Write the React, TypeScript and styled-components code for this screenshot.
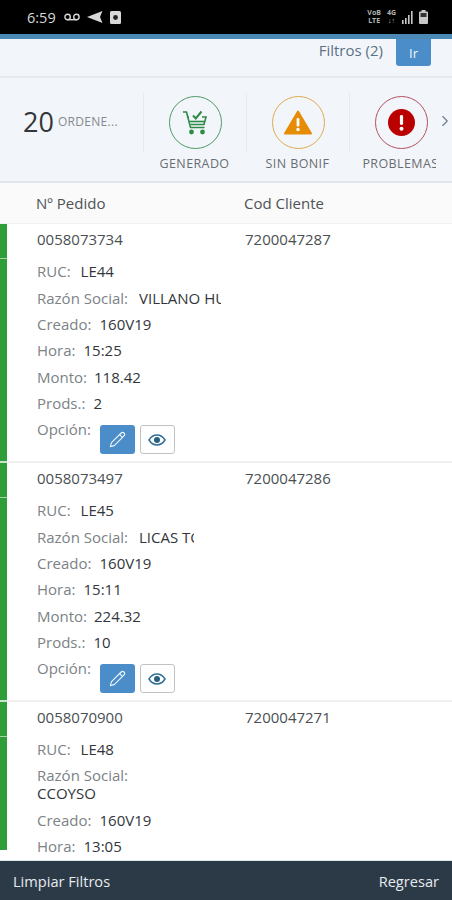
import React from "react";
import styled, { createGlobalStyle } from "styled-components";
import { Pencil, ChevronRight } from "lucide-react";

const GlobalStyle = createGlobalStyle`
  html, body {
    margin: 0;
    padding: 0;
    background: #ffffff;
    font-family: "Open Sans", "Liberation Sans", sans-serif;
  }
`;

const Page = styled.div`
  width: 452px;
  height: 900px;
  display: flex;
  flex-flow: column;
  overflow: hidden;
`;

const StatusBar = styled.div`
  height: 34px;
  flex: none;
  background: #000000;
  display: flex;
  align-items: center;
  justify-content: space-between;
  padding: 0 24px 0 27px;
  color: #d8d8d8;
`;

const StatusLeft = styled.div`
  display: flex;
  align-items: center;
  gap: 7px;
`;

const Clock = styled.span`
  font-size: 14.5px;
  margin-right: 1px;
`;

const StatusRight = styled.div`
  display: flex;
  align-items: center;
  gap: 6px;
`;

const NetworkText = styled.span`
  font-size: 7px;
  line-height: 8px;
  font-weight: 700;
  color: #b4b4b4;
  text-align: center;
`;

const Toolbar = styled.div`
  height: 44px;
  flex: none;
  box-sizing: border-box;
  border-top: 5px solid #4c88b5;
  border-bottom: 2px solid #e6eaef;
  background: #f2f6fb;
  display: flex;
  align-items: flex-start;
  justify-content: flex-end;
  gap: 13px;
  padding-right: 21px;
`;

const FilterLabel = styled.span`
  font-size: 15px;
  line-height: 22px;
  color: #5d7184;
`;

const GoButton = styled.button`
  width: 35px;
  height: 27px;
  border: none;
  border-radius: 0 0 3px 3px;
  background: #4a8dc9;
  color: #f4f8fb;
  font-family: inherit;
  font-size: 13px;
  padding: 0;
`;

const TabBar = styled.div`
  height: 105px;
  flex: none;
  box-sizing: border-box;
  border-bottom: 2px solid #dfe5ec;
  background: #f2f6fb;
  display: flex;
`;

const TabStrip = styled.div`
  width: 436px;
  flex: none;
  display: flex;
  overflow: hidden;
  padding-left: 19px;
  box-sizing: border-box;
`;

const CountTab = styled.div`
  width: 117px;
  height: 105px;
  flex: none;
  box-sizing: border-box;
  border-bottom: 2px solid #1c5c82;
  display: flex;
  align-items: center;
  padding: 0 0 17px 4px;
  margin-right: 7px;
`;

const CountNumber = styled.span`
  font-size: 27px;
  color: #32363a;
  margin-right: 4px;
`;

const CountLabel = styled.span`
  font-size: 12px;
  color: #85898c;
  letter-spacing: 0.3px;
`;

const IconTab = styled.div`
  width: 103px;
  flex: none;
  display: flex;
  flex-flow: column;
  padding-top: 15px;
`;

const IconCell = styled.div`
  height: 59px;
  box-sizing: border-box;
  border-left: 1px solid #e6eaef;
  display: flex;
  align-items: center;
  justify-content: center;
`;

const IconCircle = styled.div<{ $color: string }>`
  width: 53px;
  height: 53px;
  box-sizing: border-box;
  border-radius: 50%;
  border: 1.5px solid ${(p) => p.$color};
  display: flex;
  align-items: center;
  justify-content: center;
`;

const TabLabel = styled.div`
  font-size: 12.5px;
  line-height: 16px;
  margin-top: 4px;
  text-align: center;
  white-space: nowrap;
  color: #6a6d70;
  letter-spacing: 0.4px;
`;

const ChevronBox = styled.div`
  flex: 1;
  display: flex;
  justify-content: center;
  padding-top: 34px;
  color: #6a7b8c;
`;

const HeaderRow = styled.div`
  height: 41px;
  flex: none;
  box-sizing: border-box;
  background: #fafafa;
  border-bottom: 1px solid #f0f0f0;
  display: grid;
  grid-template-columns: 208px 1fr;
  align-items: center;
  padding-left: 36px;
  font-size: 15px;
  color: #4e5356;
`;

const List = styled.div`
  flex: 1;
  min-height: 0;
  overflow: hidden;
`;

const Item = styled.div<{ $last?: boolean }>`
  height: ${(p) => (p.$last ? "148px" : "239px")};
  display: flex;
  flex-flow: column;
`;

const TopRow = styled.div`
  height: 34px;
  flex: none;
  box-sizing: border-box;
  border-left: 7px solid #2f9e3a;
  display: grid;
  grid-template-columns: 208px 1fr;
  align-items: center;
  padding: 0 0 4px 30px;
  font-size: 15px;
  color: #4a4f52;
`;

// faint line that only shows where it crosses the green status bar
const BarGap = styled.div`
  height: 1px;
  flex: none;
  background: linear-gradient(to right, #a5d6a9 7px, #ffffff 7px);
`;

const ItemEnd = styled.div`
  height: 2px;
  flex: none;
  background: linear-gradient(to right, #c9e4cb 7px, #f0f0f0 7px);
`;

const Details = styled.div`
  flex: 1;
  min-height: 0;
  box-sizing: border-box;
  border-left: 7px solid #2f9e3a;
  padding-left: 30px;
  display: flex;
  flex-flow: column;
`;

const Line = styled.div`
  height: 26.4px;
  flex: none;
  box-sizing: border-box;
  padding-bottom: 2px;
  display: flex;
  align-items: center;
  font-size: 15px;
  color: #32363a;
  white-space: nowrap;
`;

const WrappedLine = styled.div`
  flex: none;
  font-size: 15px;
  line-height: 18px;
  color: #32363a;
  padding: 3px 0 5px;
`;

const Label = styled.span<{ $gap?: number }>`
  color: #7c8286;
  margin-right: ${(p) => p.$gap ?? 8}px;
`;

const ClippedValue = styled.span<{ $width: number }>`
  display: inline-block;
  width: ${(p) => p.$width}px;
  overflow: hidden;
`;

const OptionRow = styled.div`
  display: flex;
  flex: none;
  align-items: flex-start;
  font-size: 15px;
  color: #7c8286;
  height: 36px;
  line-height: 24px;
`;

const OptionLabel = styled.span`
  margin-right: 9px;
`;

const EditButton = styled.button`
  width: 35px;
  height: 29px;
  margin-top: 8px;
  border: none;
  border-radius: 3px;
  background: #4a8dc9;
  color: #eef5fb;
  display: flex;
  align-items: center;
  justify-content: center;
  padding: 0;
`;

const ViewButton = styled.button`
  width: 35px;
  height: 29px;
  margin: 8px 0 0 5px;
  box-sizing: border-box;
  border: 1px solid #bfc3c6;
  border-radius: 3px;
  background: #ffffff;
  display: flex;
  align-items: center;
  justify-content: center;
  padding: 0;
`;

const Footer = styled.div`
  height: 40px;
  flex: none;
  box-sizing: border-box;
  border-top: 1px solid #dfe8ea;
  background: #2c3a47;
  color: #e6ebef;
  font-size: 14.6px;
  display: flex;
  align-items: center;
  justify-content: space-between;
  padding: 0 13px;
`;

const VoicemailIcon = () => (
  <svg width="16" height="8" viewBox="0 0 16 8" fill="none" stroke="#d8d8d8" strokeWidth="1.4">
    <circle cx="3.6" cy="4" r="2.7" />
    <circle cx="12.4" cy="4" r="2.7" />
    <path d="M3.6 6.7h8.8" />
  </svg>
);

const SendIcon = () => (
  <svg width="16" height="12" viewBox="0 0 16 12" fill="#d8d8d8">
    <path d="M0 6 15.5 0 13 6l2.5 6z" />
  </svg>
);

const PhotoIcon = () => (
  <svg width="11" height="13" viewBox="0 0 11 13">
    <rect width="11" height="13" rx="1.5" fill="#d8d8d8" />
    <circle cx="5.5" cy="6.5" r="2.4" fill="#222222" />
  </svg>
);

const SignalIcon = () => (
  <svg width="11" height="13" viewBox="0 0 11 13" fill="#c8c8c8">
    <rect x="0" y="9" width="1.6" height="4" />
    <rect x="3" y="7" width="1.6" height="6" />
    <rect x="6" y="4" width="1.6" height="9" />
    <rect x="9" y="0" width="1.6" height="13" />
  </svg>
);

const BatteryIcon = () => (
  <svg width="9" height="14" viewBox="0 0 9 14">
    <rect x="2.5" y="0" width="4" height="2" fill="#c8c8c8" />
    <rect y="1.5" width="9" height="12.5" rx="1" fill="#c8c8c8" />
    <rect x="1.5" y="3" width="6" height="4" fill="#333333" />
  </svg>
);

const CartCheckIcon = () => (
  <svg width="28" height="28" viewBox="0 0 28 28" fill="none" stroke="#2e8b45" strokeWidth="1.6">
    <path d="M2 3h3.5l4 15.5h14" />
    <path d="M7 8h1M21 8h4l-2 7.5H9.5" />
    <path d="M8.5 12.5h15" />
    <path d="M12 6.5l2.8 3L20.5 2.5" strokeWidth="2" />
    <circle cx="10.5" cy="23" r="1.6" fill="#2e8b45" />
    <circle cx="21.5" cy="23" r="1.6" fill="#2e8b45" />
  </svg>
);

const WarningIcon = () => (
  <svg width="28" height="25" viewBox="0 0 28 25">
    <path d="M14 1.5 27 23.5H1z" fill="#e78c07" stroke="#e78c07" strokeWidth="2" strokeLinejoin="round" />
    <rect x="12.6" y="8" width="2.8" height="8.5" rx="1.2" fill="#ffffff" />
    <circle cx="14" cy="19.5" r="1.7" fill="#ffffff" />
  </svg>
);

const ErrorIcon = () => (
  <svg width="27" height="27" viewBox="0 0 27 27">
    <circle cx="13.5" cy="13.5" r="13.5" fill="#bb0000" />
    <rect x="11.9" y="6" width="3.2" height="10" rx="1.4" fill="#ffffff" />
    <circle cx="13.5" cy="19.7" r="2" fill="#ffffff" />
  </svg>
);

const EyeIcon = () => (
  <svg width="18" height="12" viewBox="0 0 18 12" fill="none">
    <path d="M1 6c2-3.2 4.8-5 8-5s6 1.800 8 5c-2 3.200-4.800 5-8 5S3 9.200 1 6z" stroke="#2f6f96" strokeWidth="1.5" />
    <circle cx="9" cy="6" r="3" fill="#2a5f80" />
  </svg>
);

type Order = {
  id: string;
  client: string;
  ruc: string;
  razon: string;
  razonWidth: number;
  hora: string;
  monto: string;
  prods: string;
};

const orders: Order[] = [
  { id: "0058073734", client: "7200047287", ruc: "LE44", razon: "VILLANO HUAMAN", razonWidth: 82, hora: "15:25", monto: "118.42", prods: "2" },
  { id: "0058073497", client: "7200047286", ruc: "LE45", razon: "LICAS TORRES", razonWidth: 55, hora: "15:11", monto: "224.32", prods: "10" },
];

const App = () => {
  return (
    <Page>
      <GlobalStyle />
      <StatusBar>
        <StatusLeft>
          <Clock>6:59</Clock>
          <VoicemailIcon />
          <SendIcon />
          <PhotoIcon />
        </StatusLeft>
        <StatusRight>
          <NetworkText>
            VoB
            <br />
            LTE
          </NetworkText>
          <NetworkText>
            4G
            <br />
            ↓↑
          </NetworkText>
          <SignalIcon />
          <BatteryIcon />
        </StatusRight>
      </StatusBar>

      <Toolbar>
        <FilterLabel>Filtros (2)</FilterLabel>
        <GoButton>Ir</GoButton>
      </Toolbar>

      <TabBar>
        <TabStrip>
          <CountTab>
            <CountNumber>20</CountNumber>
            <CountLabel>ORDENE...</CountLabel>
          </CountTab>
          <IconTab>
            <IconCell>
              <IconCircle $color="#4f9a63">
                <CartCheckIcon />
              </IconCircle>
            </IconCell>
            <TabLabel>GENERADO</TabLabel>
          </IconTab>
          <IconTab>
            <IconCell>
              <IconCircle $color="#e0a94f">
                <WarningIcon />
              </IconCircle>
            </IconCell>
            <TabLabel>SIN BONIF</TabLabel>
          </IconTab>
          <IconTab>
            <IconCell>
              <IconCircle $color="#b5505f">
                <ErrorIcon />
              </IconCircle>
            </IconCell>
            <TabLabel>PROBLEMAS</TabLabel>
          </IconTab>
        </TabStrip>
        <ChevronBox>
          <ChevronRight size={18} strokeWidth={1.5} />
        </ChevronBox>
      </TabBar>

      <HeaderRow>
        <span>Nº Pedido</span>
        <span>Cod Cliente</span>
      </HeaderRow>

      <List>
        {orders.map((order) => (
          <Item key={order.id}>
            <TopRow>
              <span>{order.id}</span>
              <span>{order.client}</span>
            </TopRow>
            <BarGap />
            <Details>
              <Line>
                <Label $gap={10}>RUC:</Label>
                {order.ruc}
              </Line>
              <Line>
                <Label $gap={11}>Razón Social:</Label>
                <ClippedValue $width={order.razonWidth}>{order.razon}</ClippedValue>
              </Line>
              <Line>
                <Label>Creado:</Label>
                160V19
              </Line>
              <Line>
                <Label>Hora:</Label>
                {order.hora}
              </Line>
              <Line>
                <Label $gap={7}>Monto:</Label>
                {order.monto}
              </Line>
              <Line>
                <Label>Prods.:</Label>
                {order.prods}
              </Line>
              <OptionRow>
                <OptionLabel>Opción:</OptionLabel>
                <EditButton>
                  <Pencil size={17} strokeWidth={1.6} />
                </EditButton>
                <ViewButton>
                  <EyeIcon />
                </ViewButton>
              </OptionRow>
            </Details>
            <ItemEnd />
          </Item>
        ))}
        <Item $last>
          <TopRow>
            <span>0058070900</span>
            <span>7200047271</span>
          </TopRow>
          <BarGap />
          <Details>
            <Line>
              <Label $gap={10}>RUC:</Label>
              LE48
            </Line>
            <WrappedLine>
              <Label>Razón Social:</Label>
              <br />
              CCOYSO
            </WrappedLine>
            <Line>
              <Label>Creado:</Label>
              160V19
            </Line>
            <Line>
              <Label>Hora:</Label>
              13:05
            </Line>
          </Details>
        </Item>
      </List>

      <Footer>
        <span>Limpiar Filtros</span>
        <span>Regresar</span>
      </Footer>
    </Page>
  );
};

export default App;
